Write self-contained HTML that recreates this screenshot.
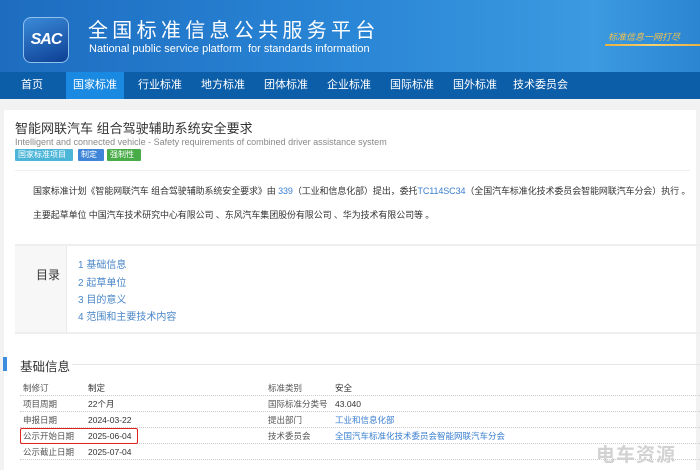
<!DOCTYPE html>
<html><head><meta charset="utf-8"><style>
*{margin:0;padding:0;box-sizing:border-box}
body{width:700px;height:464px;overflow:hidden;background:#f2f2f2;font-family:"Liberation Sans","Noto Sans CJK SC",sans-serif;position:relative}
.hd{position:absolute;left:0;top:0;width:700px;height:72px;background:linear-gradient(90deg,#1d6cc0 0%,#2a86d6 50%,#3b9ae0 85%,#2c85d2 100%)}
.logo{position:absolute;left:23px;top:17px;width:46px;height:46px;border-radius:8px;background:linear-gradient(160deg,#3b8ad8,#0c3f94);border:1px solid #8fc0ee;color:#fff;font-weight:bold;font-style:italic;font-size:16px;line-height:44px;text-align:center;letter-spacing:-1px}
.t1{position:absolute;left:88px;top:14px;color:#fff;font-size:20px;letter-spacing:4.3px}
.t2{position:absolute;left:89px;top:43px;color:#fff;font-size:11px}
.slogan{position:absolute;left:608px;top:30px;color:#f2c14e;font-size:9px;font-style:italic}
.nav{position:absolute;left:0;top:72px;width:700px;height:27px;background:#0d5ea9}
.nav span{position:absolute;top:0;line-height:27px;color:#fff;font-size:11px}
.nav .on{background:#1a89e2;width:58px;text-align:center}
.card{position:absolute;left:4px;top:110px;width:692px;height:360px;background:#fff}
.tt{position:absolute;left:15px;top:118px;font-size:13px;color:#333}
.en{position:absolute;left:15px;top:137px;font-size:9px;color:#888}
.tag{position:absolute;top:149px;height:12px;font-size:8px;color:#fff;line-height:12px;padding:0 3px;border-radius:1px}
.hr{position:absolute;left:15px;top:170px;width:675px;height:1px;background:#eee}
.p{position:absolute;left:33px;font-size:9px;color:#333;white-space:nowrap;letter-spacing:-0.1px}
.p a{color:#3a7fd0;text-decoration:none}
.toc{position:absolute;left:15px;top:244px;width:685px;height:90px;border-top:2px solid #eee;border-bottom:2px solid #eee}
.toc .l{position:absolute;left:0;top:0;width:52px;height:100%;background:#f7f7f7;border-right:1px solid #eaeaea}
.toc .l span{position:absolute;left:21px;top:20px;font-size:12px;color:#333}
.toc .i{position:absolute;left:63px;font-size:10px;color:#4a86c8}
.sec{position:absolute;left:3px;top:357px;width:4px;height:14px;background:#3c8de0}
.st{position:absolute;left:20px;top:356px;font-size:12.5px;color:#333}
.sl{position:absolute;left:72px;top:364px;width:628px;height:1px;background:#e6e6e6}
.row{position:absolute;left:20px;width:680px;height:16px;border-bottom:1px dotted #ccc;font-size:8.5px;color:#333;line-height:16px}
.row span{position:absolute;top:0}
.row .k{color:#555}
.row a{color:#3a7fd0}
.red{position:absolute;left:20px;top:428px;width:118px;height:16px;border:1.5px solid #e8201a;border-radius:2px}
.wm{position:absolute;left:596px;top:440px;font-size:19px;color:#c8c8c8;letter-spacing:1px;font-weight:bold;opacity:.8}
</style></head><body>
<div class="hd">
<div class="logo">SAC</div>
<div class="t1">全国标准信息公共服务平台</div>
<div class="t2">National public service platform&nbsp; for standards information</div>
<div class="slogan">标准信息一网打尽</div>
<div style="position:absolute;left:605px;top:44px;width:95px;height:2px;background:linear-gradient(90deg,#e8b040,#f7d070,#e8b040)"></div>
</div>
<div class="nav">
<span style="left:21px">首页</span>
<span class="on" style="left:66px">国家标准</span>
<span style="left:138px">行业标准</span>
<span style="left:201px">地方标准</span>
<span style="left:264px">团体标准</span>
<span style="left:327px">企业标准</span>
<span style="left:390px">国际标准</span>
<span style="left:453px">国外标准</span>
<span style="left:513px">技术委员会</span>
</div>
<div class="card"></div>
<div class="tt">智能网联汽车 组合驾驶辅助系统安全要求</div>
<div class="en">Intelligent and connected vehicle - Safety requirements of combined driver assistance system</div>
<span class="tag" style="left:15px;width:58px;background:#4cb6d8">国家标准项目</span>
<span class="tag" style="left:78px;width:26px;background:#3f86d8">制定</span>
<span class="tag" style="left:107px;width:34px;background:#48ac48">强制性</span>
<div class="hr"></div>
<div class="p" style="top:184px">国家标准计划《智能网联汽车 组合驾驶辅助系统安全要求》由 <a>339</a>（工业和信息化部）提出，委托<a>TC114SC34</a>（全国汽车标准化技术委员会智能网联汽车分会）执行 。</div>
<div class="p" style="top:208px">主要起草单位 中国汽车技术研究中心有限公司 、东风汽车集团股份有限公司 、华为技术有限公司等 。</div>
<div class="toc"><div class="l"><span>目录</span></div>
<div class="i" style="top:10px">1 基础信息</div>
<div class="i" style="top:28px">2 起草单位</div>
<div class="i" style="top:45px">3 目的意义</div>
<div class="i" style="top:62px">4 范围和主要技术内容</div>
</div>
<div class="sec"></div><div class="st">基础信息</div><div class="sl"></div>
<div class="row" style="top:380px"><span class="k" style="left:3px">制修订</span><span style="left:68px">制定</span><span class="k" style="left:248px">标准类别</span><span style="left:315px">安全</span></div>
<div class="row" style="top:396px"><span class="k" style="left:3px">项目周期</span><span style="left:68px">22个月</span><span class="k" style="left:248px">国际标准分类号</span><span style="left:315px">43.040</span></div>
<div class="row" style="top:412px"><span class="k" style="left:3px">申报日期</span><span style="left:68px">2024-03-22</span><span class="k" style="left:248px">提出部门</span><span style="left:315px"><a>工业和信息化部</a></span></div>
<div class="row" style="top:428px"><span class="k" style="left:3px">公示开始日期</span><span style="left:68px">2025-06-04</span><span class="k" style="left:248px">技术委员会</span><span style="left:315px"><a>全国汽车标准化技术委员会智能网联汽车分会</a></span></div>
<div class="row" style="top:444px"><span class="k" style="left:3px">公示截止日期</span><span style="left:68px">2025-07-04</span></div>
<div class="red"></div>
<div class="wm">电车资源</div>
</body></html>
